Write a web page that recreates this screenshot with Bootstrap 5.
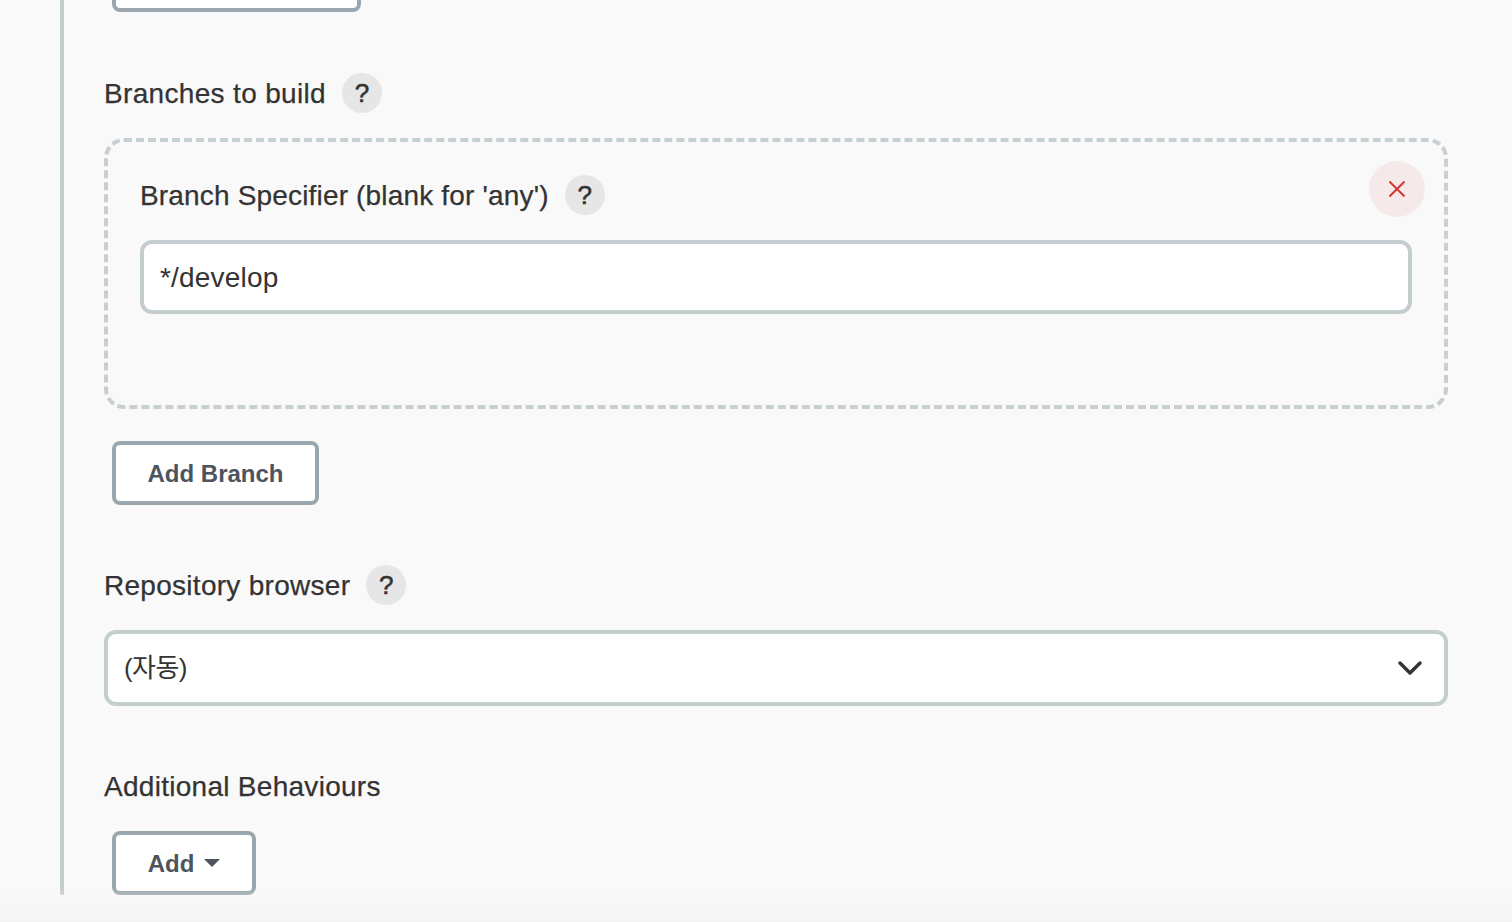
<!DOCTYPE html>
<html lang="ko">
  <head>
    <meta charset="UTF-8" />
    <meta name="viewport" content="width=device-width, initial-scale=1" />
    <title>Branches to build</title>
    <link href="https://cdn.jsdelivr.net/npm/bootstrap@5.3.0/dist/css/bootstrap.min.css" rel="stylesheet" />
    <script defer src="https://cdn.jsdelivr.net/npm/bootstrap@5.3.0/dist/js/bootstrap.bundle.min.js"></script>
    <style>
      html, body { height: 922px; overflow: hidden; }
      body {
        background: #f9f9f9;
        color: #333;
        font-family: "Liberation Sans", "Noto Sans CJK KR", sans-serif;
      }
      .job-section {
        margin-left: 60px;
        margin-right: 64px;
        height: 895px;
        padding-left: 40px;
        border-left: 4px solid #c5cdd1;
        border-bottom-left-radius: 2px;
      }
      .cut-btn {
        display: block;
        width: 249px;
        height: 12px;
        margin-left: 8px;
        background: #fff;
        border: 4px solid #9ba7af;
        border-top: 0;
        border-radius: 0 0 8px 8px;
      }
      .field-title {
        display: flex;
        align-items: flex-start;
        gap: 16px;
        height: 40px;
        margin: 0;
        font-size: 28px;
        line-height: 42px;
        letter-spacing: 0.33px;
        -webkit-text-stroke: 0.25px #333;
      }
      .branches-title { margin-top: 61px; }
      .specifier-title { letter-spacing: 0.17px; }
      .repo-title { margin-top: 60px; letter-spacing: 0.28px; }
      .behaviours-title { margin-top: 60px; letter-spacing: 0.28px; }
      .help-dot {
        width: 40px;
        height: 40px;
        border-radius: 50%;
        background: #e6e6e6;
        color: #333;
        font-size: 26px;
        font-weight: 400;
        line-height: 40px;
        text-align: center;
        letter-spacing: 0;
        -webkit-text-stroke: 0.6px #333;
      }
      .branch-box {
        position: relative;
        height: 271px;
        margin-top: 25px;
        padding: 33px 32px 0;
        border: 4px dashed #c7cfd3;
        border-radius: 20px;
      }
      .close-dot {
        position: absolute;
        top: 19px;
        right: 19px;
        width: 56px;
        height: 56px;
        padding: 0;
        border: 0;
        border-radius: 50%;
        background: #f5e9e9;
        display: flex;
        align-items: center;
        justify-content: center;
      }
      .jenkins-input.form-control,
      .jenkins-input.form-select {
        border: 4px solid #c5cdd1;
        border-radius: 12px;
        background-color: #fff;
        color: #333;
        box-shadow: none;
      }
      .jenkins-input.form-control {
        height: 74px;
        margin-top: 25px;
        padding: 2px 16px 0;
        font-size: 28px;
        letter-spacing: 0.2px;
      }
      .jenkins-input.form-select {
        height: 76px;
        margin-top: 25px;
        padding: 0 16px;
        font-size: 26px;
        letter-spacing: -0.6px;
        background-image: url("data:image/svg+xml,%3Csvg xmlns='http://www.w3.org/2000/svg' viewBox='0 0 24 14'%3E%3Cpath d='M2 2l10 10L22 2' fill='none' stroke='%23333' stroke-width='3.4' stroke-linecap='round' stroke-linejoin='round'/%3E%3C/svg%3E");
        background-position: right 22px center;
        background-size: 24px 14px;
      }
      .outline-btn.btn {
        display: inline-flex;
        align-items: center;
        justify-content: center;
        height: 64px;
        margin-left: 8px;
        padding: 2px 0 0;
        background: #fff;
        border: 4px solid #9ba7af;
        border-radius: 8px;
        color: #4d545d;
        font-size: 24px;
        font-weight: 700;
      }
      .add-branch { width: 207px; margin-top: 32px; }
      .add-behaviour { width: 144px; margin-top: 25px; gap: 10px; }
      .caret-down {
        width: 0;
        height: 0;
        margin-top: -3px;
        border-left: 8.5px solid transparent;
        border-right: 8.5px solid transparent;
        border-top: 8px solid #4d545d;
      }
      .bottom-fade {
        position: absolute;
        left: 0;
        right: 0;
        bottom: 0;
        height: 34px;
        background: linear-gradient(to bottom, rgba(245,245,245,0), #f5f5f5);
        pointer-events: none;
      }
    </style>
  </head>
  <body>
    <main class="job-section">
      <span class="cut-btn"></span>

      <h2 class="field-title fw-normal branches-title">
        Branches to build <span class="help-dot">?</span>
      </h2>
      <div class="branch-box">
        <h3 class="field-title specifier-title fw-normal">
          Branch Specifier (blank for 'any') <span class="help-dot">?</span>
        </h3>
        <button type="button" class="close-dot" aria-label="Delete">
          <svg width="16" height="16" viewBox="0 0 16 16">
            <path d="M0.5 0.5l15 15M15.5 0.5l-15 15" stroke="#d33833" stroke-width="2" fill="none" />
          </svg>
        </button>
        <input class="form-control jenkins-input" type="text" value="*/develop" />
      </div>
      <button type="button" class="btn outline-btn add-branch">Add Branch</button>

      <h2 class="field-title fw-normal repo-title">
        Repository browser <span class="help-dot">?</span>
      </h2>
      <select class="form-select jenkins-input">
        <option>(자동)</option>
      </select>

      <h2 class="field-title fw-normal behaviours-title">Additional Behaviours</h2>
      <button type="button" class="btn outline-btn add-behaviour">
        Add <span class="caret-down"></span>
      </button>
    </main>
    <div class="bottom-fade"></div>
  </body>
</html>
